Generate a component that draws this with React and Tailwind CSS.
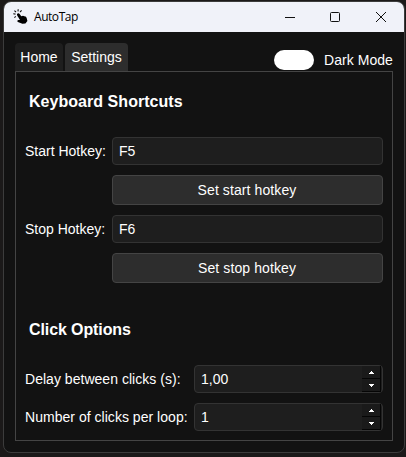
import React from "react";

function TapIcon() {
  return (
    <svg width="16" height="16" viewBox="0 0 16 16" className="-mt-px shrink-0">
      <path
        d="M4.2 4.8C4.9 3.9 6 4.1 6.6 4.9L8.3 7.2L10 6.7L11.2 7.2L12.6 7.4L13.6 8.8L14.4 12L12.4 14.4L9.4 14.8L4.9 13C3.9 12.1 4.4 10.8 5.6 10.9L7 11L4.2 6.4C3.9 5.8 3.9 5.2 4.2 4.8Z"
        fill="#000"
      />
      <path d="M0.3 4.8L2.5 5.1M1.4 1.6L3 3M5.2 0.2L5 2.4M8.6 1.4L7.1 3M1.4 8.6L2.8 7.3" stroke="#111" strokeWidth="1.1" fill="none" />
    </svg>
  );
}

function TitleBar() {
  return (
    <div className="flex h-[30px] shrink-0 items-center bg-[#f0f2f9] pl-[9px] text-black">
      <TapIcon />
      <span className="ml-[5px] flex-1 font-['Open_Sans','Noto_Sans',sans-serif] text-[12px] leading-[16px] tracking-[-0.45px]">AutoTap</span>
      <svg width="130" height="12" viewBox="0 0 130 12" fill="none" stroke="#111" className="mr-[3px] -mt-px shrink-0">
        <path d="M14 6.5H24" />
        <rect x="59.5" y="1.5" width="9" height="9" rx="1" />
        <path d="M105 1L115 11M115 1L105 11" />
      </svg>
    </div>
  );
}

function Hotkey({ label, value, action }) {
  return (
    <div className="grid grid-cols-[87px_271px] gap-y-[10px]">
      <label className="flex items-center">{label}</label>
      <div className="flex h-[28px] items-center rounded-[4px] border border-[#333] bg-[#1e1e1e] pl-[6px]">{value}</div>
      <button className="col-start-2 h-[30px] rounded-[4px] border border-[#444] bg-[#2d2d2d] pr-px tracking-[0.1px]">{action}</button>
    </div>
  );
}

function StepButton({ down }) {
  return (
    <div className="flex h-[13px] w-[19px] items-center justify-center border-r border-b border-[#050505] bg-[#1a1a1a]">
      <svg width="5" height="3" viewBox="0 0 5 3" shapeRendering="crispEdges" fill="#fff">
        <path d={down ? "M0 0H5V1H4V2H3V3H2V2H1V1H0Z" : "M2 0H3V1H4V2H5V3H0V2H1V1H2Z"} />
      </svg>
    </div>
  );
}

function SpinRow({ label, value }) {
  return (
    <div className="flex h-[28px] items-center">
      <label className="w-[169px] whitespace-nowrap tracking-[0.03px]">{label}</label>
      <div className="flex h-[28px] w-[189px] items-center justify-between rounded-[4px] border border-[#333] bg-[#1e1e1e] pl-[6px]">
        <span>{value}</span>
        <div className="mr-[1px] flex flex-col">
          <StepButton />
          <StepButton down />
        </div>
      </div>
    </div>
  );
}

export default function App() {
  return (
    <div className="h-[457px] w-[406px] overflow-hidden bg-[#1b1919] pt-px pl-[3px] font-['Liberation_Sans',Arial,sans-serif] text-[14px] leading-[16px] text-white">
      <div className="flex h-[452px] w-[402px] flex-col overflow-hidden rounded-[8px] border border-[#3c3c3c] bg-[#121212]">
        <TitleBar />
        <div className="flex h-[39px] shrink-0 items-end pr-[11px] pl-[11px]">
          <div className="flex h-[28px] w-[48px] items-center justify-center rounded-t-[4px] bg-[#1e1e1e]">Home</div>
          <div className="ml-[2px] flex h-[28px] w-[63px] items-center justify-center rounded-t-[4px] bg-[#2d2d2d]">Settings</div>
          <div className="mb-px ml-auto flex items-center">
            <div className="h-[20px] w-[40px] rounded-full bg-white" />
            <span className="ml-[10px] w-[69px] whitespace-nowrap tracking-[0.05px]">Dark Mode</span>
          </div>
        </div>
        <div className="ml-[11px] h-[370px] w-[378px] border border-[#444] pl-[9px]">
          <h2 className="mt-[20px] ml-[4px] text-[16px] leading-[20px] font-bold tracking-[0.04px]">Keyboard Shortcuts</h2>
          <div className="mt-[25px] flex flex-col gap-[10px]">
            <Hotkey label="Start Hotkey:" value="F5" action="Set start hotkey" />
            <Hotkey label="Stop Hotkey:" value="F6" action="Set stop hotkey" />
          </div>
          <h2 className="mt-[37px] ml-[4px] text-[16px] leading-[20px] font-bold tracking-[-0.1px]">Click Options</h2>
          <div className="mt-[25px] flex flex-col gap-[10px]">
            <SpinRow label="Delay between clicks (s):" value="1,00" />
            <SpinRow label="Number of clicks per loop:" value="1" />
          </div>
        </div>
      </div>
    </div>
  );
}
